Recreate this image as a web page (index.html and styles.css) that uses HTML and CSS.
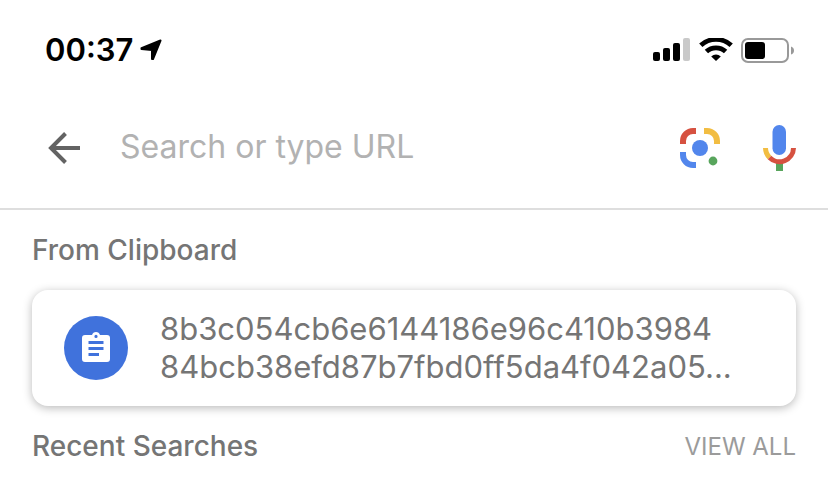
FILE: index.html
```html
<!DOCTYPE html>
<html lang="en">
<head>
<meta charset="utf-8">
<meta name="viewport" content="width=device-width, initial-scale=1">
<title>Search</title>
<link rel="stylesheet" href="styles.css">
</head>
<body>
<header class="top">
  <div class="status">
    <div class="status-time">
      <time>00:37</time>
      <svg width="22" height="22" viewBox="0 0 22 22" aria-hidden="true"><path d="M20.500 1.500 13 20h-1V11L1.500 10V9.300Z" fill="#000" stroke="#000" stroke-width="2" stroke-linejoin="round"/></svg>
    </div>
    <div class="status-icons">
      <svg width="38" height="24" viewBox="0 0 38 24" aria-hidden="true"><rect x="0" y="14" width="7" height="9" rx="2"/><rect x="10" y="10" width="7" height="13" rx="2"/><rect x="20" y="5" width="7" height="18" rx="2"/><rect x="30" y="0" width="7" height="23" rx="2" fill="#c9c9c9"/></svg>
      <svg width="34" height="24" viewBox="0 0 34 24" aria-hidden="true"><path d="M1.800 7.300a22.500 22.500 0 0 1 30.400 0M7.400 13.600a14 14 0 0 1 19.200 0" fill="none" stroke="#000" stroke-width="4.800"/><path d="M12.200 18.400a7.200 7.200 0 0 1 9.600 0L17 23Z"/></svg>
      <svg width="54" height="25" viewBox="0 0 54 25" aria-hidden="true"><rect x="1" y="1" width="46" height="23" rx="6" fill="none" stroke="#999" stroke-width="2"/><rect x="4" y="4" width="20" height="17" rx="3"/><path d="M50 8.500q3 1 3 4t-3 4Z" fill="#999"/></svg>
    </div>
  </div>
  <form class="search">
    <button class="icon-button" type="button" aria-label="Back">
      <svg width="32" height="32" viewBox="0 0 32 32"><path d="M32 16H3M17.500 1.500 3 16l14.500 14.500" fill="none" stroke="#636363" stroke-width="4"/></svg>
    </button>
    <input class="search-input" type="text" aria-label="Search or type URL" placeholder="Search or type URL">
    <button class="icon-button" type="button" aria-label="Search with camera">
      <svg width="40" height="40" viewBox="0 0 40 40"><g fill="none" stroke-width="6"><path d="M3 16v-3A10 10 0 0 1 13 3h3" stroke="#d65140"/><path d="M24 3h3a10 10 0 0 1 10 10v3" stroke="#f2bd42"/><path d="M3 24v3a10 10 0 0 0 10 10h3" stroke="#5286ec"/></g><circle cx="20" cy="20" r="8" fill="#5286ec"/><circle cx="33" cy="33" r="4.400" fill="#58a55c"/></svg>
    </button>
    <button class="icon-button" type="button" aria-label="Voice search">
      <svg width="36" height="46" viewBox="-2 0 36 46"><path d="M14 37h7v9h-7Z" fill="#58a55c"/><rect x="10.500" y="0" width="13.500" height="30" rx="6.750" fill="#5286ec"/><path d="M3.500 23a13.800 13.800 0 0 0 4 9.500" fill="none" stroke="#f2bd42" stroke-width="5"/><path d="M31.500 23a14 14 0 0 1-24 9.500" fill="none" stroke="#d65140" stroke-width="5"/></svg>
    </button>
  </form>
</header>
<main class="content">
  <section>
    <div class="section-head"><h2>From Clipboard</h2></div>
    <a class="card" href="#">
      <span class="badge"><svg width="28" height="32" viewBox="0 0 28 32" aria-hidden="true"><path fill="#fff" fill-rule="evenodd" d="M3 3h7a4.200 4.200 0 0 1 8 0h7a3 3 0 0 1 3 3v21a3 3 0 0 1-3 3H3a3 3 0 0 1-3-3V6a3 3 0 0 1 3-3ZM14 2.800a1.600 1.600 0 1 0 0 3.200 1.600 1.600 0 0 0 0-3.200ZM6.500 9v3h15V9ZM6.500 15v3h15v-3ZM6.500 21v3h10.500v-3Z"/></svg></span>
      <span class="card-text">8b3c054cb6e6144186e96c410b3984<br>84bcb38efd87b7fbd0ff5da4f042a05...</span>
    </a>
  </section>
  <section>
    <div class="section-head"><h2>Recent Searches</h2><a class="view-all" href="#">VIEW ALL</a></div>
  </section>
</main>
</body>
</html>
```
FILE: styles.css
```css
* {
  box-sizing: border-box;
}

body {
  margin: 0;
  background: #fff;
  color: #757575;
  font-family: Inter, "Liberation Sans", sans-serif;
}

svg {
  display: block;
  flex: none;
}

.top {
  border-bottom: 2px solid #dedede;
}

.status {
  display: flex;
  align-items: center;
  justify-content: space-between;
  padding: 30px 33px 18px 45px;
}

.status-time {
  display: flex;
  align-items: center;
  gap: 7px;
  color: #000;
  font-size: 31px;
  font-weight: 600;
  line-height: 40px;
}

.status-icons {
  display: flex;
  align-items: center;
  gap: 8px;
}

.search {
  display: flex;
  align-items: center;
  gap: 40px;
  height: 120px;
  padding: 0 32px 0 48px;
}

.icon-button {
  padding: 0;
  border: 0;
  background: none;
}

.search-input {
  flex: 1;
  min-width: 0;
  padding: 0 0 2px;
  border: 0;
  outline: 0;
  background: none;
  color: #636363;
  font: 400 32px/44px Inter, "Liberation Sans", sans-serif;
}

.search-input::placeholder {
  color: #b2b2b2;
  opacity: 1;
}

.content {
  padding: 0 32px;
}

.section-head {
  display: flex;
  align-items: center;
  justify-content: space-between;
  height: 80px;
}

h2 {
  margin: 0;
  font-size: 28px;
  font-weight: 500;
}

.card {
  display: flex;
  align-items: center;
  gap: 32px;
  padding: 20px 32px;
  border-radius: 16px;
  background: #fff;
  box-shadow: 0 2px 10px rgba(0, 0, 0, 0.28);
  color: inherit;
  text-decoration: none;
}

.badge {
  display: grid;
  flex: none;
  place-items: center;
  width: 64px;
  height: 64px;
  border-radius: 50%;
  background: #4072dc;
}

.card-text {
  font-size: 31px;
  line-height: 38px;
}

.view-all {
  color: #9b9b9b;
  font-size: 24px;
  font-weight: 400;
  text-decoration: none;
}
```
